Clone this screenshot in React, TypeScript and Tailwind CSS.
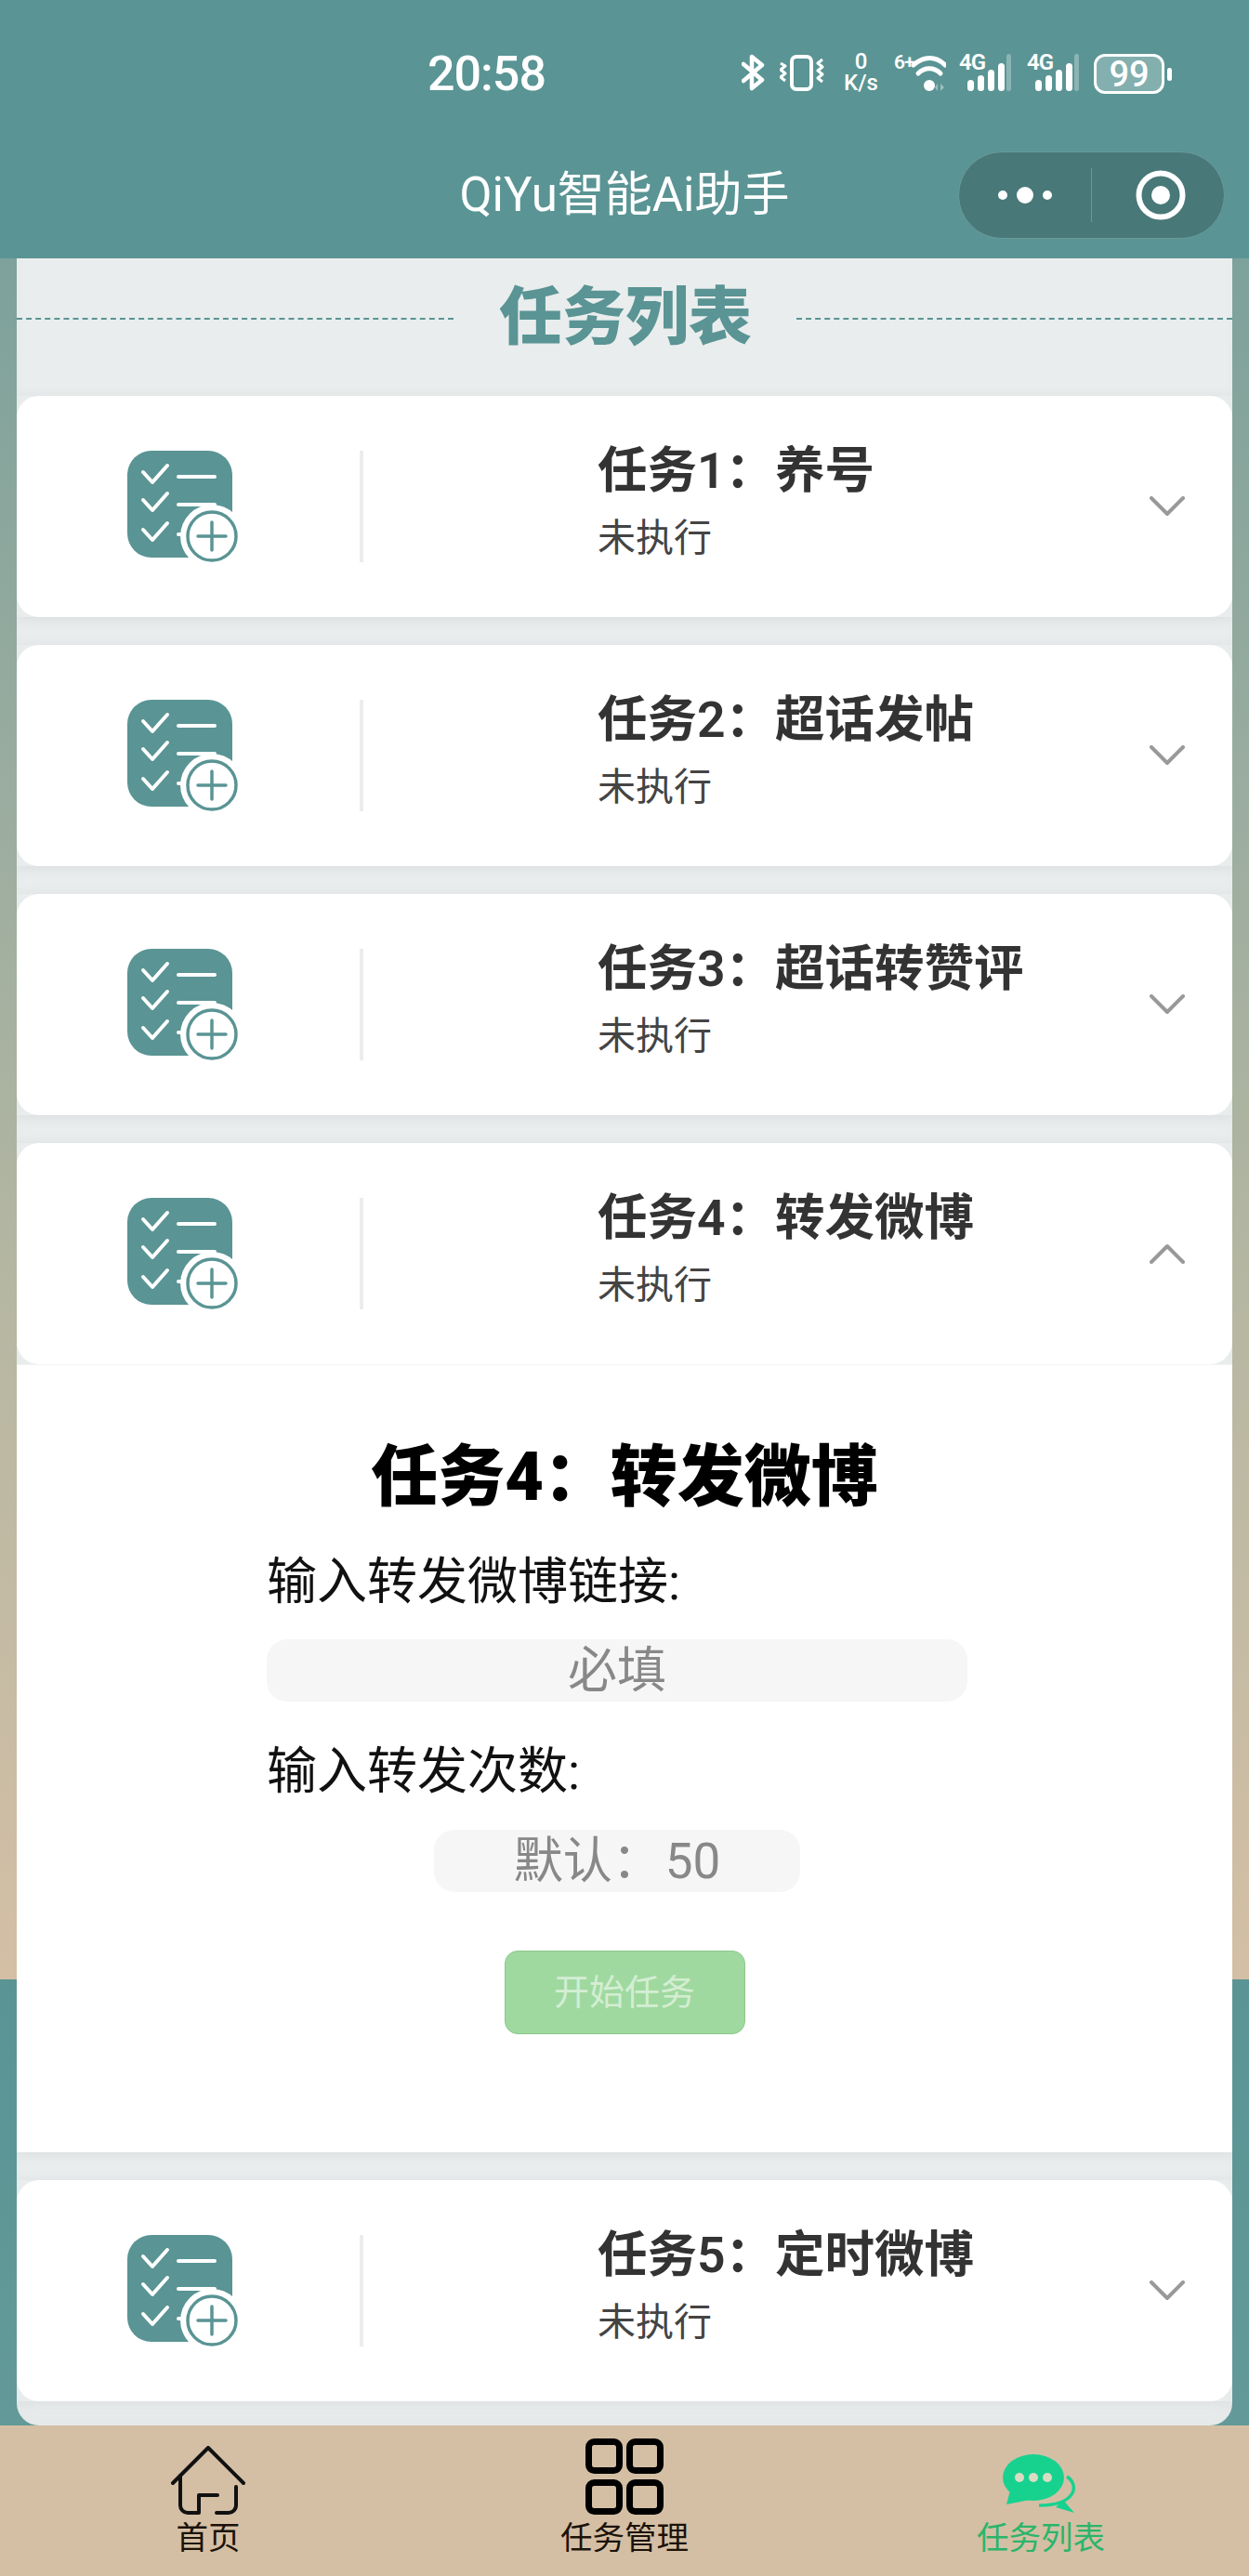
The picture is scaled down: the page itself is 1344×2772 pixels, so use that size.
const tasks = ['任务1：养号', '任务2：超话发帖', '任务3：超话转赞评', '任务4：转发微博', '任务5：定时微博'];

function TaskIcon() {
  return (
    <svg width="120" height="120" viewBox="0 0 120 120" fill="none" className="shrink-0">
      <rect x="0" y="0" width="113" height="115" rx="26" fill="#5a9494" />
      {[0, 30, 62].map((dy) => (
        <path
          key={dy}
          d={`M17 ${23 + dy} L27 ${34 + dy} L43 ${16 + dy}`}
          stroke="#fff"
          strokeWidth="4"
          strokeLinecap="round"
          strokeLinejoin="round"
        />
      ))}
      <path d="M55 28 H94 M55 58 H94 M55 90 H70" stroke="#fff" strokeWidth="4" strokeLinecap="round" />
      <circle cx="91" cy="92" r="34" fill="#fff" />
      <circle cx="91" cy="92" r="26" fill="#fff" stroke="#5a9494" strokeWidth="3.5" />
      <path d="M91 77 V107 M76 92 H106" stroke="#5a9494" strokeWidth="3.5" strokeLinecap="round" />
    </svg>
  );
}

function Chevron({ up }: { up?: boolean }) {
  return (
    <svg width="38" height="22" viewBox="0 0 38 22" fill="none" className="ml-auto mr-[51px] shrink-0">
      <path
        d={up ? 'M2 20 L19 3 L36 20' : 'M2 2 L19 19 L36 2'}
        stroke="#999"
        strokeWidth="4"
        strokeLinecap="round"
        strokeLinejoin="round"
      />
    </svg>
  );
}

function TaskRow({ title, open }: { title: string; open?: boolean }) {
  return (
    <div className="flex h-[238px] items-center rounded-[24px] bg-white pl-[119px]">
      <TaskIcon />
      <div className="ml-[130px] h-[120px] w-[4px] shrink-0 bg-[#ececec]" />
      <div className="ml-[252px] flex flex-col pb-[10px]">
        <div className="h-[60px] text-[53.5px] leading-[60px] font-semibold text-[#333]">{title}</div>
        <div className="mt-[17px] h-[50px] text-[41px] leading-[50px] text-[#444]">未执行</div>
      </div>
      <Chevron up={open} />
    </div>
  );
}

function Signal() {
  return (
    <div className="relative h-[40px] w-[56px] shrink-0">
      <span className="absolute top-[-3px] left-0 text-[24px] leading-[24px] font-semibold tracking-[-1px] text-white">4G</span>
      <svg width="56" height="40" viewBox="0 0 56 40">
        <rect x="9" y="28" width="7" height="12" rx="3.5" fill="#fff" />
        <rect x="20" y="23" width="7" height="17" rx="3.5" fill="#fff" />
        <rect x="31" y="17" width="7" height="23" rx="3.5" fill="#fff" />
        <rect x="42" y="10" width="7" height="30" rx="3.5" fill="#fff" />
        <rect x="51" y="0" width="5" height="40" rx="2.5" fill="#fff" fillOpacity="0.3" />
      </svg>
    </div>
  );
}

function StatusBar() {
  return (
    <div className="flex h-[163px] items-start pt-[58px] pl-[460px] text-white">
      <div className="w-[338px] text-[52px] leading-[44px] font-medium tracking-[-1px]">20:58</div>
      <svg width="25" height="40" viewBox="0 0 25 40" fill="none" className="shrink-0">
        <path d="M2 11 L22 28 L11 37 V3 L22 12 L2 29" stroke="#fff" strokeWidth="4.5" strokeLinejoin="round" strokeLinecap="round" />
      </svg>
      <svg width="48" height="40" viewBox="0 0 48 40" fill="none" className="ml-[16px] shrink-0">
        <rect x="13" y="3" width="21" height="35" rx="5" stroke="#fff" strokeWidth="4" />
        <path
          d="M1 10 L6 13 L1 17 L6 21 L1 25 L6 29 M46 6 L41 10 L46 14 L41 18 L46 22 L41 26 L46 30"
          stroke="#fff"
          strokeWidth="3"
          strokeLinejoin="round"
        />
      </svg>
      <div className="ml-[20px] -mt-[3px] flex w-[39px] shrink-0 flex-col items-center text-[24px] leading-[23px] font-medium">
        <span>0</span>
        <span>K/s</span>
      </div>
      <div className="relative ml-[16px] h-[42px] w-[56px] shrink-0">
        <span className="absolute top-[-3px] left-0 text-[21px] leading-[24px] font-semibold tracking-[-1px]">6+</span>
        <svg width="56" height="42" viewBox="0 0 56 42" fill="none">
          <path d="M21 12 C32 2 45 2 55 12" stroke="#fff" strokeWidth="5" strokeLinecap="round" />
          <path d="M26 21 C33 14 43 14 50 21" stroke="#fff" strokeWidth="5" strokeLinecap="round" />
          <circle cx="38" cy="34" r="6" fill="#fff" />
          <path d="M47 32 V40 L44 36 Z M50 32 V40 L54 36 Z" fill="#fff" fillOpacity="0.4" />
        </svg>
      </div>
      <div className="ml-[14px]">
        <Signal />
      </div>
      <div className="ml-[17px]">
        <Signal />
      </div>
      <div className="ml-[16px] flex h-[43px] w-[85px] shrink-0 items-center">
        <div className="flex h-[43px] w-[76px] items-center justify-center rounded-[12px] border-[3px] border-white bg-white/25 text-[38px] leading-none font-medium">
          99
        </div>
        <div className="ml-[3px] h-[14px] w-[5px] rounded-full bg-white" />
      </div>
    </div>
  );
}

function NavBar() {
  return (
    <div className="grid h-[94px] grid-cols-[1fr_auto_1fr] items-center text-white">
      <div />
      <div className="text-[51px] leading-[60px]">QiYu智能Ai助手</div>
      <div className="mr-[26px] flex h-[94px] w-[287px] items-center justify-self-end rounded-full border border-[#6a9a9a] bg-[#487878]">
        <svg width="60" height="22" viewBox="0 0 60 22" className="ml-[41px] shrink-0">
          <circle cx="6" cy="11" r="5" fill="#fff" />
          <circle cx="30" cy="11" r="9" fill="#fff" />
          <circle cx="54" cy="11" r="5" fill="#fff" />
        </svg>
        <div className="ml-[41px] h-[58px] w-px bg-[#6a9a9a]" />
        <svg width="54" height="54" viewBox="0 0 54 54" fill="none" className="ml-[47px] shrink-0">
          <circle cx="27" cy="27" r="23.5" stroke="#fff" strokeWidth="6" />
          <circle cx="27" cy="27" r="10" fill="#fff" />
        </svg>
      </div>
    </div>
  );
}

function TaskDetail() {
  return (
    <div className="flex flex-col items-center border-t border-[#f2f3f3] bg-white pt-[85px] pb-[127px]">
      <div className="whitespace-nowrap text-[72px] leading-[72px] font-black text-black">任务4：转发微博</div>
      <div className="mr-[16px] flex w-[754px] flex-col text-[54px] leading-[54px] text-[#111]">
        <div className="mt-[50px]">输入转发微博链接:</div>
        <div className="mt-[34px] flex h-[67px] items-center justify-center rounded-[22px] bg-[#f6f6f6] text-[53px] text-[#888]">
          必填
        </div>
        <div className="mt-[49px]">输入转发次数:</div>
        <div className="mx-auto mt-[35px] flex h-[67px] w-[394px] items-center justify-center rounded-[22px] bg-[#f6f6f6] text-[53px] text-[#888]">
          默认：<span className="ml-[4px]">50</span>
        </div>
      </div>
      <div className="mt-[63px] flex h-[90px] w-[259px] items-center justify-center rounded-[14px] border border-[#8cc88c] bg-[#a0d9a0] text-[38px] text-[#d3eed3]">
        开始任务
      </div>
    </div>
  );
}

function HomeIcon() {
  return (
    <svg width="80" height="74" viewBox="0 0 80 74" fill="none">
      <path d="M2 40 L40 2 L78 40" stroke="#111" strokeWidth="4" strokeLinecap="round" strokeLinejoin="round" />
      <path
        d="M10 32 V64 a8 8 0 0 0 8 8 H30 V53 H50 M49 72 H62 a8 8 0 0 0 8-8 V44"
        stroke="#111"
        strokeWidth="4"
        strokeLinecap="round"
        strokeLinejoin="round"
      />
    </svg>
  );
}

function GridIcon() {
  return (
    <svg width="84" height="82" viewBox="0 0 84 82" fill="none">
      <rect x="3.5" y="3.5" width="33" height="31" rx="6" stroke="#000" strokeWidth="7" />
      <rect x="47.5" y="3.5" width="33" height="31" rx="6" stroke="#000" strokeWidth="7" />
      <rect x="3.5" y="47.5" width="33" height="31" rx="6" stroke="#000" strokeWidth="7" />
      <rect x="47.5" y="47.5" width="33" height="31" rx="6" stroke="#000" strokeWidth="7" />
    </svg>
  );
}

function ChatIcon() {
  return (
    <svg width="84" height="66" viewBox="0 0 84 66" fill="none">
      <ellipse cx="34" cy="26" rx="33" ry="25" fill="#17d28f" />
      <path d="M5 55 L10 36 L30 50 Z" fill="#17d28f" />
      <circle cx="19" cy="26" r="5" fill="#d9dcc2" />
      <circle cx="34" cy="26" r="5" fill="#d9dcc2" />
      <circle cx="49" cy="26" r="5" fill="#d9dcc2" />
      <path d="M70 25 C84 34 80 56 40 56" stroke="#17d28f" strokeWidth="3.5" fill="none" />
      <path d="M66 50 L78 64 L58 58 Z" fill="#17d28f" />
    </svg>
  );
}

function TabItem({ label, active, children }: { label: string; active?: boolean; children: React.ReactNode }) {
  return (
    <div className="flex flex-col items-center">
      <div className="flex h-[88px] items-end pb-[4px]">{children}</div>
      <div className={`mt-[1px] text-[34.5px] leading-[40px] ${active ? 'text-[#2bb56a]' : 'text-[#1c1208]'}`}>{label}</div>
    </div>
  );
}

export default function App() {
  return (
    <div className="flex h-[2772px] w-[1344px] flex-col overflow-hidden bg-[linear-gradient(#6f9c9a_0px,#b6b7a2_1400px,#d4bfa5_2130px,#5a9494_2130px,#639999_2610px)] font-['Roboto','Noto_Sans_CJK_SC',sans-serif]">
      <div className="h-[278px] shrink-0 bg-[#5a9494] pb-[21px]">
        <StatusBar />
        <NavBar />
      </div>

      <div className="mx-[18px] flex h-[2332px] shrink-0 flex-col overflow-hidden rounded-b-[24px] bg-[#eaeded] shadow-[inset_0_-12px_16px_rgba(0,0,0,0.02)]">
        <div className="flex h-[148px] shrink-0 items-start">
          <div className="mt-[64px] w-[470px] border-t-2 border-dashed border-[#5a9494]" />
          <div className="ml-[49px] w-[271px] whitespace-nowrap pt-[24px] text-[68px] leading-[80px] font-black text-[#5a9494]">任务列表</div>
          <div className="ml-[49px] mt-[64px] flex-1 border-t-2 border-dashed border-[#5a9494]" />
        </div>

        <div className="flex flex-col gap-[30px]">
          {tasks.map((title, i) => (
            <div key={title} className="shadow-[0_2px_14px_rgba(0,0,0,0.07)]">
              <TaskRow title={title} open={i === 3} />
              {i === 3 && <TaskDetail />}
            </div>
          ))}
        </div>
      </div>

      <div className="grid flex-1 grid-cols-3 bg-[#d4bfa5] pt-[12px]">
        <TabItem label="首页">
          <HomeIcon />
        </TabItem>
        <TabItem label="任务管理">
          <GridIcon />
        </TabItem>
        <TabItem label="任务列表" active>
          <ChatIcon />
        </TabItem>
      </div>
    </div>
  );
}
